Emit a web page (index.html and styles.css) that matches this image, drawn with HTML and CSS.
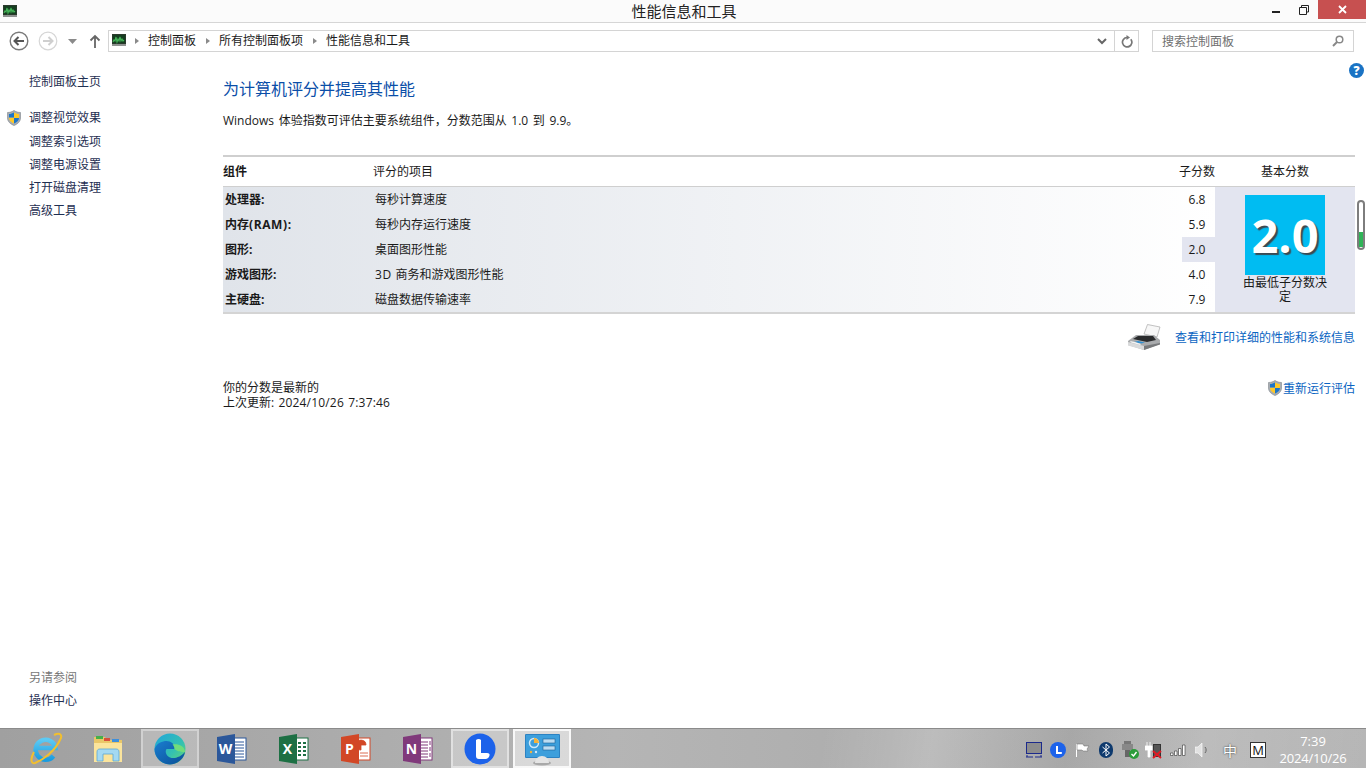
FILE: index.html
```html
<!DOCTYPE html>
<html lang="zh-CN">
<head>
<meta charset="utf-8">
<title>性能信息和工具</title>
<link rel="stylesheet" href="styles.css">
</head>
<body>
<svg class="defs" width="0" height="0">
  <defs>
    <symbol id="perf" viewBox="0 0 14 12">
      <rect x="0" y="0" width="14" height="10" fill="#2a3a2c"/>
      <rect x="1" y="1" width="12" height="8" fill="#153d20"/>
      <path d="M1 8l1-2 1 1 1-4 1 5 1-3 1 2 1-4 1 4 1-2 1 2 1-1" fill="none" stroke="#45b658" stroke-width="1.100"/>
      <rect x="0" y="10" width="14" height="2" fill="#8e9290"/>
    </symbol>
    <symbol id="shield" viewBox="0 0 16 16">
      <path d="M8 .5c2 1.300 4 2 6.500 2v5.500c0 3.500-2.800 6-6.500 7.500-3.700-1.500-6.500-4-6.500-7.500V2.500c2.500 0 4.500-.7 6.500-2z" fill="#a8adb3" stroke="#7e848a" stroke-width=".6"/>
      <path d="M8 2.500v5H3v.5c0 2.500 2.200 4.300 5 5.400V8h5V4c-2 0-3.500-.6-5-1.500z" fill="#ffc928"/>
      <path d="M8 2.500C6.500 3.400 5 4 3 4v3.500h5zM8 8v5.400c2.800-1.100 5-2.900 5-5.400z" fill="#1b75c9"/>
    </symbol>
  </defs>
</svg>

<div class="window">
  <header class="titlebar">
    <svg class="title-icon"><use href="#perf"/></svg>
    <div class="title-text">性能信息和工具</div>
    <div class="win-controls">
      <span class="win-btn"><i class="min-glyph"></i></span>
      <span class="win-btn">
        <svg width="10" height="10" viewBox="0 0 10 10"><path d="M2.500 2.500V.5h7v6.500H7.500M.5 2.500h7v7h-7z" fill="none" stroke="#222"/></svg>
      </span>
      <span class="win-close">
        <svg width="9" height="9" viewBox="0 0 9 9"><path d="M1 1l7 7M8 1L1 8" stroke="#fff" stroke-width="1.800"/></svg>
      </span>
    </div>
  </header>

  <nav class="toolbar">
    <span class="nav-round">
      <svg width="20" height="20" viewBox="0 0 20 20"><circle cx="10" cy="10" r="8.800" fill="#fff" stroke="#7a7a7a" stroke-width="1.400"/><path d="M15 10H6M9.500 6L5.500 10l4 4" fill="none" stroke="#555" stroke-width="2"/></svg>
    </span>
    <span class="nav-round">
      <svg width="20" height="20" viewBox="0 0 20 20"><circle cx="10" cy="10" r="8.800" fill="#fff" stroke="#d6d6d6" stroke-width="1.200"/><path d="M5 10h9M10.500 6l4 4-4 4" fill="none" stroke="#cfcfcf" stroke-width="2"/></svg>
    </span>
    <svg class="nav-drop" width="9" height="5" viewBox="0 0 9 5"><path d="M0 0h9L4.500 5z" fill="#8a8a8a"/></svg>
    <svg class="nav-up" width="12" height="14" viewBox="0 0 12 14"><path d="M6 14V2M1.500 6.500L6 2l4.500 4.500" fill="none" stroke="#666" stroke-width="1.800"/></svg>
    <div class="address">
      <svg class="addr-icon"><use href="#perf"/></svg>
      <span class="crumb-arrow"></span><span class="crumb">控制面板</span>
      <span class="crumb-arrow"></span><span class="crumb">所有控制面板项</span>
      <span class="crumb-arrow"></span><span class="crumb">性能信息和工具</span>
      <span class="addr-drop">
        <svg width="10" height="7" viewBox="0 0 10 7"><path d="M1 1l4 4 4-4" fill="none" stroke="#666" stroke-width="2"/></svg>
      </span>
      <span class="addr-refresh">
        <svg width="12" height="13" viewBox="0 0 12 13"><path d="M9.800 4.200A4.700 4.700 0 1 1 6 2.500" fill="none" stroke="#777" stroke-width="1.700"/><path d="M5.500 0v5l3.500-2.500z" fill="#777"/></svg>
      </span>
    </div>
    <div class="search">
      <span class="search-text">搜索控制面板</span>
      <svg width="12" height="12" viewBox="0 0 12 12"><circle cx="7.500" cy="4.500" r="3.300" fill="none" stroke="#888" stroke-width="1.500"/><path d="M5 7l-4 4" stroke="#888" stroke-width="2"/></svg>
    </div>
  </nav>

  <div class="body-row">
    <aside class="sidebar">
      <a class="side-link side-home">控制面板主页</a>
      <div class="side-group">
        <div class="side-shield-row">
          <svg class="side-shield"><use href="#shield"/></svg>
          <a class="side-link">调整视觉效果</a>
        </div>
        <a class="side-link">调整索引选项</a>
        <a class="side-link">调整电源设置</a>
        <a class="side-link">打开磁盘清理</a>
        <a class="side-link">高级工具</a>
      </div>
      <div class="side-bottom">
        <div class="side-see">另请参阅</div>
        <a class="side-link">操作中心</a>
      </div>
    </aside>

    <main class="content">
      <h1 class="heading">为计算机评分并提高其性能</h1>
      <p class="intro">Windows 体验指数可评估主要系统组件，分数范围从 1.0 到 9.9。</p>

      <div class="table-head">
        <div class="th-comp">组件</div>
        <div class="th-item">评分的项目</div>
        <div class="th-sub">子分数</div>
        <div class="th-base">基本分数</div>
      </div>

      <div class="table-body">
        <div class="rows">
          <div class="row"><b class="c-comp">处理器:</b><span class="c-item">每秒计算速度</span><span class="c-sub">6.8</span></div>
          <div class="row"><b class="c-comp">内存<span class="wide">(RAM):</span></b><span class="c-item">每秒内存运行速度</span><span class="c-sub">5.9</span></div>
          <div class="row"><b class="c-comp">图形:</b><span class="c-item">桌面图形性能</span><span class="c-sub c-low">2.0</span></div>
          <div class="row"><b class="c-comp">游戏图形:</b><span class="c-item"><span class="wide">3D </span>商务和游戏图形性能</span><span class="c-sub">4.0</span></div>
          <div class="row"><b class="c-comp">主硬盘:</b><span class="c-item">磁盘数据传输速率</span><span class="c-sub">7.9</span></div>
        </div>
        <div class="score-panel">
          <div class="score-tile">2.0</div>
          <div class="score-note">由最低子分数决定</div>
        </div>
      </div>

      <div class="print-row">
        <svg width="34" height="27" viewBox="0 0 34 27">
          <path d="M17 10L20.500 .5 33 3l-3 10z" fill="#f7f7f7" stroke="#a9a9a9" stroke-width=".7"/>
          <path d="M1 17l8-6h18l6 5v4L17 26 1 21z" fill="#a9abad"/>
          <path d="M6 15l5-3h15l3 4-9 2z" fill="#2a2b2d"/>
          <path d="M1 18l16 4v4L1 21.500z" fill="#d9dadb"/>
          <path d="M17 22l16-3v1.500L17 26z" fill="#77797b"/>
          <path d="M7 18l7 1.500 4-1-7-1.500z" fill="#2f8ed0"/>
          <path d="M3 17l5 1 6 2-1 1-9-2.500z" fill="#f4f4f4"/>
        </svg>
        <a class="blue-link">查看和打印详细的性能和系统信息</a>
      </div>

      <div class="status-row">
        <div class="status-text">
          <div>你的分数是最新的</div>
          <div>上次更新:<span class="wide-date"> 2024/10/26 7:37:46</span></div>
        </div>
        <a class="blue-link rerun"><svg class="rerun-shield"><use href="#shield"/></svg>重新运行评估</a>
      </div>
    </main>

    <div class="rail">
      <div class="help">?</div>
      <div class="usage"><i class="usage-fill"></i></div>
    </div>
  </div>
</div>

<footer class="taskbar">
  <div class="apps">
    <span class="app">
      <svg width="34" height="34" viewBox="0 0 34 34">
        <defs><linearGradient id="ieBlue" x1="0" y1="0" x2="0" y2="1"><stop offset="0" stop-color="#5ccaf4"/><stop offset="1" stop-color="#1a9ce0"/></linearGradient></defs>
        <path d="M7 16h19.500A10 10 0 1 0 24.500 24" fill="none" stroke="url(#ieBlue)" stroke-width="4.500"/>
        <path d="M25 3c6-3 9 0 6 5C26 19 14 28 6 31 2 32 1 27 5 20" fill="none" stroke="#f2bf2e" stroke-width="2"/>
      </svg>
    </span>
    <span class="app">
      <svg width="32" height="30" viewBox="0 0 32 30">
        <path d="M2 3h11l2 3h15v22H2z" fill="#e9c769"/>
        <rect x="4" y="2" width="7" height="3" fill="#46b04a"/>
        <rect x="12" y="4" width="6" height="3" fill="#d8503c"/>
        <rect x="20" y="5" width="7" height="3" fill="#3d8fdc"/>
        <path d="M2 9h28v19H2z" fill="#fbe49c"/>
        <path d="M5 27v-9c0-2 1-3 3-3h16c2 0 3 1 3 3v9h-6v-7H11v7z" fill="#a4d9f2" stroke="#5aa6d6" stroke-width=".8"/>
      </svg>
    </span>
    <span class="app app-active">
      <svg width="32" height="32" viewBox="0 0 32 32">
        <defs>
          <linearGradient id="edgeA" x1="0" y1="0" x2="1" y2="1"><stop offset="0" stop-color="#1ea5dc"/><stop offset=".6" stop-color="#35c1b0"/><stop offset="1" stop-color="#6ed96a"/></linearGradient>
          <linearGradient id="edgeB" x1="0" y1="0" x2="1" y2="1"><stop offset="0" stop-color="#1a7ed0"/><stop offset="1" stop-color="#0b4f96"/></linearGradient>
        </defs>
        <circle cx="16" cy="16" r="15.500" fill="url(#edgeA)"/>
        <path d="M31 19c-1 7-8 12.500-15 12.500C7 31.500 .5 24 .5 16c2-6 8-8 12-8 5 0 9 4 8 8h-8c-2 3 0 8 5 9 5 .5 10-2 13.500-6z" fill="url(#edgeB)"/>
        <path d="M20.500 16c0-2-1-3.500-2-4.500 4-1 12 0 12.500 7.500-3 0-7 0-10.500-3z" fill="#71dc7c"/>
      </svg>
    </span>
    <span class="app">
      <svg width="30" height="30" viewBox="0 0 30 30">
        <rect x="15" y="4" width="14" height="22" fill="#fff" stroke="#2b579a"/>
        <path d="M18 8h9M18 11h9M18 14h9M18 17h9M18 20h9M18 23h9" stroke="#2b579a"/>
        <path d="M0 3l18-3v30L0 27z" fill="#2b579a"/>
        <text x="8.500" y="20" text-anchor="middle" class="app-letter">W</text>
      </svg>
    </span>
    <span class="app">
      <svg width="30" height="30" viewBox="0 0 30 30">
        <rect x="15" y="4" width="14" height="22" fill="#fff" stroke="#1d7044"/>
        <path d="M19 8h3v2h-3zM24 8h3v2h-3zM19 12h3v2h-3zM24 12h3v2h-3zM19 16h3v2h-3zM24 16h3v2h-3zM19 20h3v2h-3zM24 20h3v2h-3z" fill="#1d7044"/>
        <path d="M0 3l18-3v30L0 27z" fill="#1d7044"/>
        <text x="8.500" y="20" text-anchor="middle" class="app-letter">X</text>
      </svg>
    </span>
    <span class="app">
      <svg width="30" height="30" viewBox="0 0 30 30">
        <rect x="15" y="4" width="14" height="22" fill="#fff" stroke="#d24726"/>
        <path d="M19 16a5 5 0 1 1 6-5h-5v5zM19 19h8M19 22h8" fill="#d24726" stroke="#d24726" stroke-width=".8"/>
        <path d="M0 3l18-3v30L0 27z" fill="#d24726"/>
        <text x="8.500" y="20" text-anchor="middle" class="app-letter">P</text>
      </svg>
    </span>
    <span class="app">
      <svg width="30" height="30" viewBox="0 0 30 30">
        <rect x="15" y="4" width="14" height="22" fill="#fff" stroke="#80397b"/>
        <path d="M18 8h7M18 11h7M18 14h7M18 17h7M18 20h7M18 23h7M27 7v4M27 13v4M27 19v4" stroke="#80397b"/>
        <path d="M0 3l18-3v30L0 27z" fill="#80397b"/>
        <text x="8.500" y="20" text-anchor="middle" class="app-letter">N</text>
      </svg>
    </span>
    <span class="app app-open">
      <svg width="32" height="32" viewBox="0 0 32 32">
        <circle cx="16" cy="16" r="15.500" fill="#1c62ea"/>
        <path d="M12 7c1.500-1.500 4-1.500 5 0v13h6c2 0 3 1 2.500 2.500-.5 2-2 3.500-4 3.500H15c-2 0-3-1-3-3z" fill="#fff"/>
      </svg>
    </span>
    <span class="app app-current">
      <svg width="36" height="34" viewBox="-1 -2 36 34">
        <rect x="0" y="0" width="35" height="24" rx="1" fill="#2c82c2"/>
        <rect x="1" y="1" width="33" height="22" fill="#3d9fdc"/>
        <circle cx="9" cy="9" r="4.500" fill="none" stroke="#cfe8f8" stroke-width="1.500"/>
        <path d="M9 4a5 5 0 0 1 5 5H9z" fill="#f4b23a"/>
        <rect x="18" y="5" width="12" height="4" fill="#bcdcf2" stroke="#1d5f94" stroke-width=".6"/>
        <rect x="18" y="12" width="12" height="4" fill="#bcdcf2" stroke="#1d5f94" stroke-width=".6"/>
        <circle cx="6" cy="18" r="1.200" fill="#f4b23a"/><circle cx="11" cy="18" r="1.200" fill="#cfe8f8"/>
        <ellipse cx="17" cy="29" rx="9" ry="2.500" fill="#a9a9a9"/>
        <path d="M10 29c0-4 3-7 7-7s7 3 7 7z" fill="#e4e4e4"/>
      </svg>
    </span>
  </div>
  <div class="tray">
    <span class="tray-slot"><svg width="16" height="16" viewBox="0 0 16 16"><rect x=".5" y=".5" width="15" height="11" fill="#8d8d8d" stroke="#1c2a8c"/><path d="M0 15h7M9 15h7M1 13v2M15 13v2" stroke="#1c2a8c"/></svg></span>
    <span class="tray-slot"><svg width="16" height="16" viewBox="0 0 16 16"><circle cx="8" cy="8" r="8" fill="#1c62ea"/><path d="M6 4h2v6h3c.7 0 1 .3 1 1s-.5 1-1 1H6z" fill="#fff"/></svg></span>
    <span class="tray-slot"><svg width="16" height="16" viewBox="0 0 16 16"><path d="M2.500 2v13" stroke="#fff"/><path d="M3 2h6l1 2h5l-2 3 1 2h-5l-1-1H3z" fill="#fff" stroke="#666" stroke-width=".5"/></svg></span>
    <span class="tray-slot"><svg width="14" height="16" viewBox="0 0 14 16"><rect x="0" y="0" width="14" height="16" rx="7" fill="#0e3a6e"/><path d="M3.500 5l7 6-3.500 3V2l3.500 3-7 6" fill="none" stroke="#fff"/></svg></span>
    <span class="tray-slot"><svg width="18" height="18" viewBox="0 0 18 18"><rect x="3" y="0" width="7" height="3" fill="#777"/><rect x="1" y="3" width="11" height="6" fill="#888"/><rect x="4" y="9" width="5" height="7" fill="#666"/><circle cx="13" cy="13" r="5" fill="#2a9c3a"/><path d="M10.500 13l2 2 3-4" fill="none" stroke="#fff" stroke-width="1.400"/></svg></span>
    <span class="tray-slot"><svg width="18" height="18" viewBox="0 0 18 18"><path d="M2 1v4M5 1v4M0 5h7v4H5v7H3V9H0z" fill="#fff" stroke="#fff" stroke-width=".8"/><rect x="8.500" y="3.500" width="7" height="12" fill="#555" stroke="#333"/><path d="M8 10l8 7M16 10l-8 7" stroke="#e01b24" stroke-width="2"/></svg></span>
    <span class="tray-slot"><svg width="16" height="12" viewBox="0 0 16 12"><path d="M.5 9h2.500v2.500H.5zM4.500 7h2.500v4.500H4.500zM8.500 4.500h2.500v7H8.500zM12.500 1h2.500v10.500h-2.500z" fill="#fff" stroke="#333" stroke-width=".6"/></svg></span>
    <span class="tray-slot"><svg width="14" height="14" viewBox="0 0 14 14"><path d="M0 4h3l4-4v14l-4-4H0z" fill="#e2e2e2" stroke="#fff" stroke-width=".6"/><path d="M10 4c1.500 1.500 1.500 4.500 0 6" fill="none" stroke="#666"/></svg></span>
    <span class="tray-ime">中</span>
    <span class="tray-m">M</span>
  </div>
  <div class="clock">
    <div>7:39</div>
    <div class="clock-date">2024/10/26</div>
  </div>
</footer>
</body>
</html>
```

FILE: styles.css
```css
* { box-sizing: border-box; }
html, body { margin: 0; padding: 0; height: 100%; }
body {
  width: 1366px;
  height: 768px;
  overflow: hidden;
  display: flex;
  flex-direction: column;
  font-family: "Open Sans", "Noto Sans CJK SC", sans-serif;
  font-size: 12px;
  color: #1a1a1a;
  background: #fff;
}
a { text-decoration: none; }
.defs { position: absolute; }

.window { flex: 1; display: flex; flex-direction: column; min-height: 0; }

.titlebar {
  height: 23px;
  background: #fbfbfb;
  border-bottom: 1px solid #d6d6d6;
  display: flex;
  align-items: flex-start;
}
.title-icon { width: 14px; height: 12px; margin: 5px 0 0 3px; flex: none; }
.title-text {
  flex: 1;
  text-align: center;
  font-size: 15px;
  line-height: 22px;
  color: #222;
  padding-left: 89px;
}
.win-controls { display: flex; align-items: flex-start; }
.win-btn { width: 28px; height: 20px; display: flex; align-items: center; justify-content: center; }
.min-glyph { width: 8px; height: 2px; background: #222; margin-top: 4px; }
.win-close {
  width: 48px;
  height: 19px;
  background: #c75050;
  display: flex;
  align-items: center;
  justify-content: center;
}

.toolbar { height: 33px; display: flex; align-items: center; padding: 3px 0 0 9px; flex: none; }
.nav-round { width: 29px; display: flex; }
.nav-drop { margin: 0 0 0 1px; }
.nav-up { margin-left: 12px; }
.address {
  margin-left: 7px;
  width: 1031px;
  height: 22px;
  border: 1px solid #d4d4d4;
  display: flex;
  align-items: center;
  background: #fff;
}
.addr-icon { width: 14px; height: 12px; margin: -3px 0 0 3px; flex: none; }
.crumb-arrow {
  width: 0; height: 0;
  border-left: 4px solid #8a8a8a;
  border-top: 3.500px solid transparent;
  border-bottom: 3.500px solid transparent;
  margin: 0 9px 0 9px;
}
.crumb { color: #1a1a1a; line-height: 20px; }
.crumb + .crumb-arrow { margin-left: 10px; }
.addr-drop {
  margin-left: auto;
  width: 25px;
  height: 100%;
  display: flex;
  align-items: center;
  justify-content: center;
  border-right: 1px solid #d4d4d4;
}
.addr-refresh { width: 23px; display: flex; align-items: center; justify-content: center; }
.search {
  margin-left: 13px;
  width: 202px;
  height: 22px;
  border: 1px solid #d4d4d4;
  display: flex;
  align-items: center;
  justify-content: space-between;
  padding: 0 9px;
}
.search-text { color: #6f6f6f; }

.body-row { flex: 1; display: flex; min-height: 0; }
.sidebar {
  width: 223px;
  flex: none;
  display: flex;
  flex-direction: column;
  padding: 14px 0 16px 29px;
}
.side-link { display: block; line-height: 23px; color: #1f2f52; height: 23px; }
.side-home { margin-bottom: 13px; }
.side-group { display: flex; flex-direction: column; }
.side-shield-row { display: flex; align-items: center; margin-left: -23px; height: 24px; }
.side-shield-row .side-link { margin-bottom: 2px; }
.side-shield { width: 16px; height: 16px; margin-right: 7px; flex: none; }
.side-bottom { margin-top: auto; }
.side-see { color: #777; line-height: 23px; height: 23px; }

.content { width: 1132px; flex: none; padding-top: 21px; display: flex; flex-direction: column; }
.heading {
  margin: 0;
  font-size: 16px;
  font-weight: 400;
  line-height: 24px;
  color: #0a4ea8;
}
.intro { margin: 10px 0 0; line-height: 20px; word-spacing: 1.500px; }

.table-head {
  margin-top: 24px;
  height: 32px;
  padding-bottom: 2px;
  border-top: 2px solid #cfcfcf;
  border-bottom: 1px solid #cfcfcf;
  display: flex;
  align-items: center;
}
.th-comp { width: 150px; font-weight: 700; }
.th-item { flex: 1; }
.th-sub { width: 36px; text-align: right; }
.th-base { width: 140px; text-align: center; }

.table-body { display: flex; height: 127px; border-bottom: 2px solid #d4d4d4; }
.rows {
  flex: 1;
  background: linear-gradient(90deg, #e0e4ea 0%, #ffffff 100%);
}
.row { height: 25px; display: flex; align-items: center; }
.c-comp { width: 150px; padding: 0 0 2px 2px; font-weight: 700; }
.c-item { flex: 1; padding: 0 0 2px 2px; }
.wide { letter-spacing: .6px; }
.wide-date { letter-spacing: .18px; word-spacing: 1px; }
.c-sub {
  width: 33px;
  height: 25px;
  line-height: 25px;
  text-align: center;
  padding-right: 3px;
}
.c-low { background: #e3e5f0; }

.score-panel {
  width: 140px;
  flex: none;
  background: #e3e5f0;
  display: flex;
  flex-direction: column;
  align-items: center;
  padding-top: 8px;
}
.score-tile {
  width: 80px;
  height: 80px;
  background: #00bcf2;
  color: #fff;
  font-size: 47px;
  font-weight: 700;
  line-height: 80px;
  text-align: center;
  text-shadow: 2px 2px 1px #3c4a52;
}
.score-note { width: 86px; text-align: center; line-height: 14px; margin-top: 1px; }

.print-row {
  display: flex;
  justify-content: flex-end;
  align-items: center;
  gap: 14px;
  height: 34px;
  margin-top: 6px;
}
.blue-link { color: #0a64c2; }

.status-row {
  margin-top: 26px;
  display: flex;
  justify-content: space-between;
  align-items: flex-start;
}
.status-text { line-height: 15px; }
.rerun { display: flex; align-items: center; line-height: 15px; }
.rerun-shield { width: 16px; height: 16px; }

.rail { flex: 1; display: flex; flex-direction: column; align-items: flex-start; padding-top: 7px; }
.help {
  margin-left: -6px;
  flex: none;
  width: 15px;
  height: 15px;
  border-radius: 50%;
  background: #1a73c4;
  color: #fff;
  font-size: 12px;
  font-weight: 800;
  line-height: 15px;
  text-align: center;
}
.usage {
  margin: 122px 0 0 2px;
  width: 8px;
  height: 50px;
  border: 2px solid #7d7d7d;
  border-radius: 4px;
  background: #fff;
  display: flex;
  align-items: flex-end;
  justify-content: center;
  padding-bottom: 1px;
}
.usage-fill { width: 4px; height: 15px; background: #2fb457; }

.taskbar {
  height: 40px;
  flex: none;
  display: flex;
  align-items: stretch;
  border-top: 1px solid #8b8b8b;
  background:
    linear-gradient(100deg, rgba(0,0,0,0) 60%, rgba(255,255,255,.18) 68%, rgba(0,0,0,.05) 78%, rgba(255,255,255,.12) 88%, rgba(0,0,0,0) 100%),
    linear-gradient(90deg, #a0a0a0 0%, #a9a9a9 20%, #b5b5b5 45%, #adadad 65%, #b6b6b6 100%);
}
.apps { display: flex; gap: 4px; padding-left: 17px; flex: 1; }
.app { width: 58px; display: flex; align-items: center; justify-content: center; border: 2px solid transparent; }
.app-active { background: rgba(255,255,255,.22); border-color: rgba(255,255,255,.35); }
.app-open { background: rgba(255,255,255,.3); border-color: rgba(255,255,255,.45); }
.app-current { background: rgba(255,255,255,.5); border-color: rgba(255,255,255,.8); }
.app-letter { fill: #fff; font-size: 14px; font-weight: 700; font-family: "Open Sans", sans-serif; }

.tray { display: flex; align-items: center; padding-top: 2px; }
.tray-slot { width: 24px; display: flex; justify-content: center; align-items: center; }
.tray-ime { width: 30px; text-align: center; font-size: 14px; color: #fff; margin-left: 1px; text-shadow: 0 0 2px #222; }
.tray-m {
  width: 16px;
  height: 16px;
  margin-left: 5px;
  background: #fff;
  border: 1px solid #333;
  color: #111;
  font-size: 13px;
  line-height: 14px;
  text-align: center;
}
.clock {
  width: 94px;
  margin-right: 6px;
  text-align: center;
  color: #fff;
  font-size: 13px;
  line-height: 17px;
  padding: 4px 0 0;
}
.clock-date { letter-spacing: -.2px; }
```
